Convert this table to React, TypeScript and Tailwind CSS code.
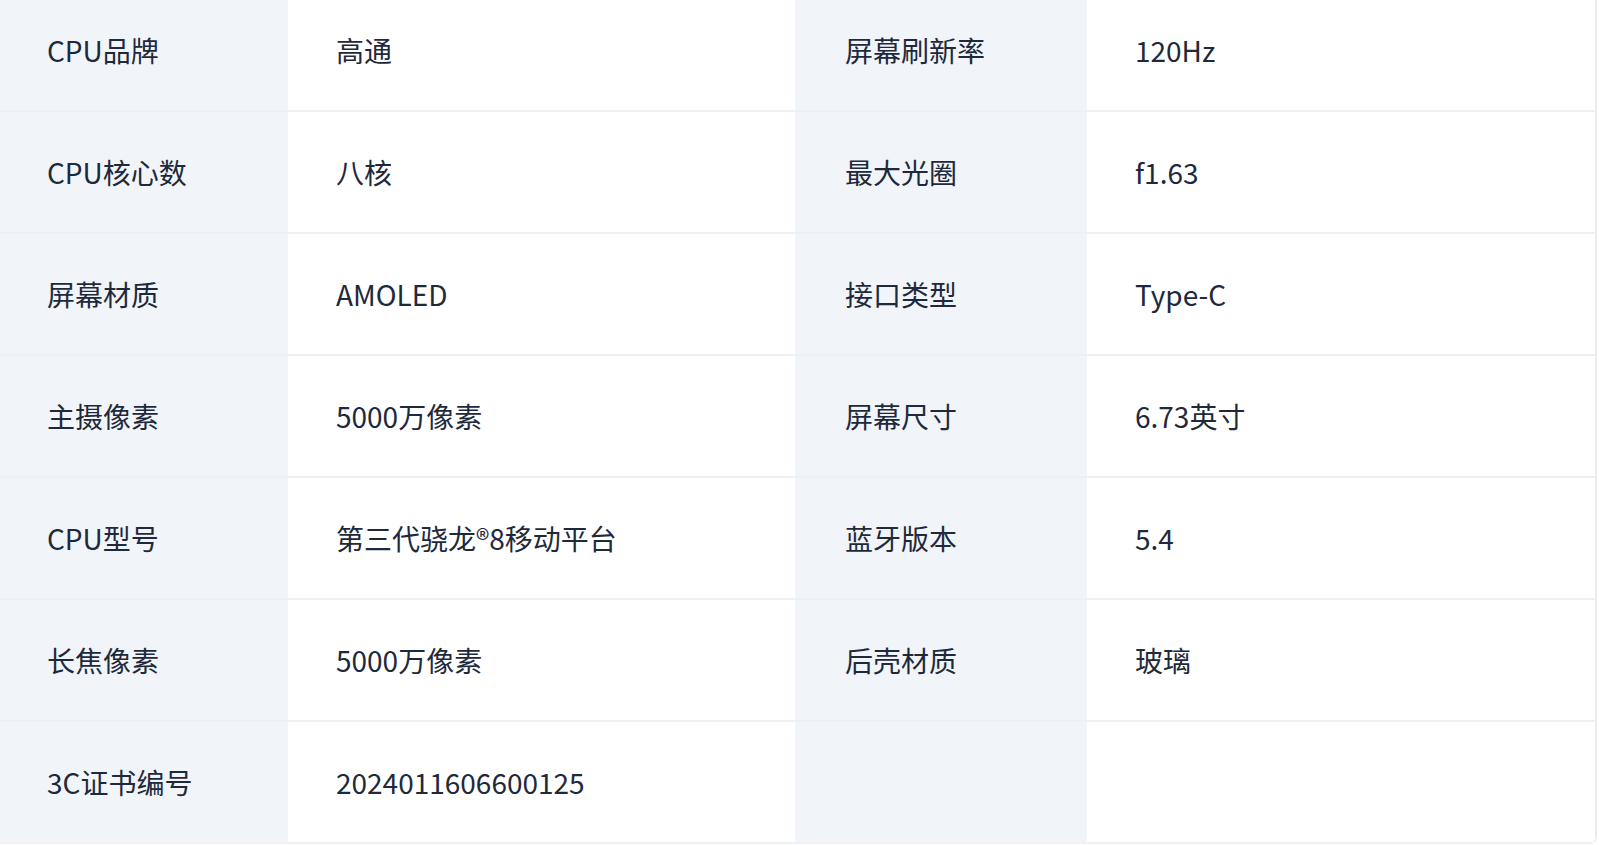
import React from "react";

const rows: [string, string, string, string][] = [
  ["CPU品牌", "高通", "屏幕刷新率", "120Hz"],
  ["CPU核心数", "八核", "最大光圈", "f1.63"],
  ["屏幕材质", "AMOLED", "接口类型", "Type-C"],
  ["主摄像素", "5000万像素", "屏幕尺寸", "6.73英寸"],
  ["CPU型号", "第三代骁龙®8移动平台", "蓝牙版本", "5.4"],
  ["长焦像素", "5000万像素", "后壳材质", "玻璃"],
  ["3C证书编号", "2024011606600125", "", ""],
];

export default function App() {
  return (
    <div
      className="w-[1599px] h-[845px] overflow-hidden bg-white"
      style={{ fontFamily: '"Noto Sans CJK SC", "Noto Sans", sans-serif' }}
    >
      <div className="-mt-[10px] w-[1597px] border-r-2 border-[#e9edf1] rounded-br-lg overflow-hidden">
        {rows.map((r, i) => (
          <div
            key={i}
            className="grid grid-cols-[288px_508px_291px_508px] h-[122px] border-b-2 border-[#edf0f4] text-[28px] text-[#1e293b]"
          >
            <div className="bg-[#f1f5f9] flex items-center pl-[47px]">{r[0]}</div>
            <div className="bg-white flex items-center pl-[48px] border-r border-[#f3f5f8]">{r[1]}</div>
            <div className="bg-[#f1f5f9] flex items-center pl-[49px]">{r[2]}</div>
            <div className="bg-white flex items-center pl-[48px]">{r[3]}</div>
          </div>
        ))}
      </div>
    </div>
  );
}
